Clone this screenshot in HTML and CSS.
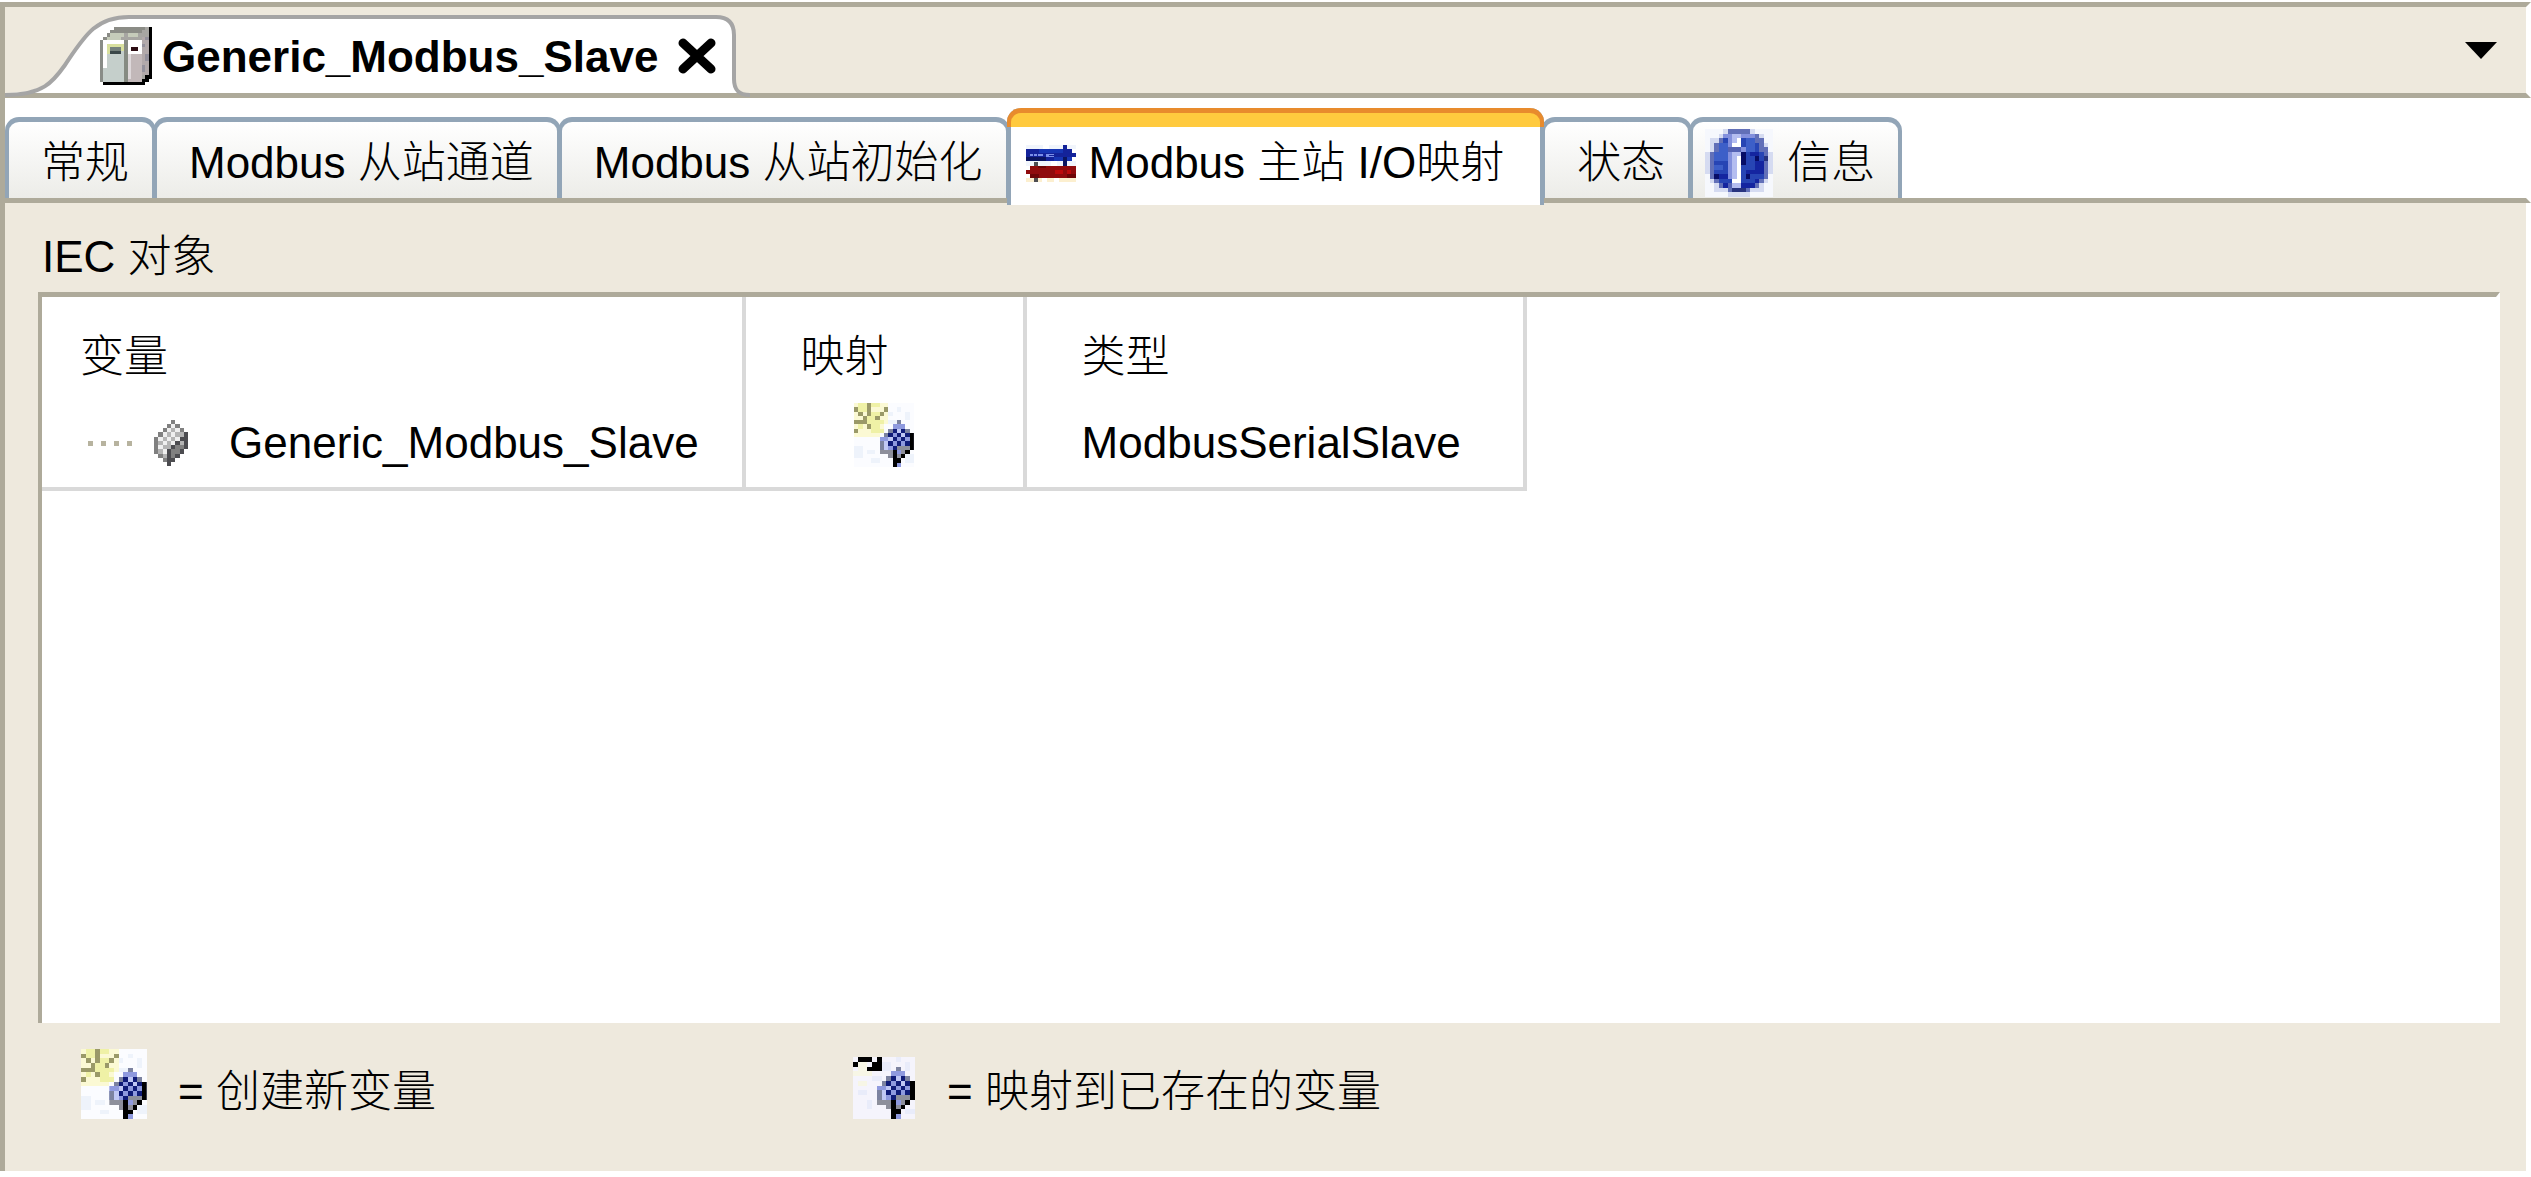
FILE: index.html
```html
<!DOCTYPE html>
<html lang="zh-CN">
  <head>
    <meta charset="UTF-8" />
    <meta name="viewport" content="width=device-width, initial-scale=1.0" />
    <title>Generic_Modbus_Slave</title>
    <link rel="stylesheet" href="styles.css">
  </head>
  <body>
    <!-- shared icon shapes -->
    <svg class="defs" aria-hidden="true">
      <symbol id="cube" viewBox="0 0 8 11">
        <path fill="#8f9ade" d="M4 0h1v1h1v1h1v1h1v4h-1v1h-1v1h-1v2h-1v-1h-1v-1h-1v-1h-1v-1h-1v-3h1v-1h1v-1h1v-1h1z" />
        <path fill="#7c83a0" d="M4 0h1v1h-1zM0 5h1v2h-1zM1 3h1v1h-1zM2 2h1v1h-1zM6 2h1v1h-1z" />
        <path fill="#8d8f9b" d="M0 7h1v1h-1zM1 7h3v1h1v1h-1v1h-1v-1h-1v-1h-1zM4 6h3v2h-1v1h-1v-2h-1z" />
        <path fill="#c0c8f4" d="M4 2h1v1h-1zM2 4h1v1h-1zM1 5h1v2h-1zM5 3h1v1h-1z" />
        <path fill="#101c78" d="M3 2h1v1h-1zM5 2h1v1h-1zM2 3h1v1h-1zM4 3h1v1h-1zM6 3h1v1h-1zM3 4h1v1h-1zM5 4h1v1h-1zM2 5h1v1h-1zM4 5h1v1h-1zM6 5h1v1h-1zM3 6h1v1h-1z" />
        <path fill="#000" d="M7 3h1v4h-1v1h-1v1h-1v1h-1v1h-1v-4h1v2h1v-1h1v-1h1z" />
      </symbol>
      <symbol id="new-var" viewBox="0 0 14 15">
        <path fill="#fbfcff" d="M0 0h14v15h-14z" />
        <path fill="#eef3fb" d="M8 2h1v1h-1zM10 1h1v1h-1zM12 2h1v2h-1zM8 4h2v1h-2zM0 10h2v3h-2zM3 11h2v1h-2zM4 13h2v1h-2zM12 12h2v2h-2z" />
        <path fill="#fbf9d4" d="M0 0h8v5h-1v2h-1v1h-6z" />
        <path fill="#eff1a6" d="M1 0h2v2h-2zM4 0h2v1h-2zM4 2h2v4h1v1h-3v-1h-1v-3h1zM1 5h1v1h-1zM6 4h1v1h-1z" />
        <path fill="#9a9968" d="M3 0h1v3h-1zM0 1h1v1h-1zM7 1h1v1h-1zM1 2h1v1h-1zM6 2h1v1h-1zM2 3h1v2h-2v-1h1zM5 3h1v1h-1zM0 4h1v1h-1zM3 5h1v1h-1zM0 6h1v1h-1z" />
        <use href="#cube" x="6" y="4" width="8" height="11" />
      </symbol>
      <symbol id="map-var" viewBox="0 0 13 13">
        <path fill="#f5f4fc" d="M0 0h13v13h-13z" />
        <path fill="#e9ecfa" d="M6 1h2v2h-2zM9 0h1v1h-1zM11 1h1v2h-1zM4 4h2v1h-2zM1 7h2v1h-2zM3 9h1v2h-1zM11 11h2v1h-2z" />
        <path fill="#f7f6e6" d="M1 1h2v2h-2zM0 3h4v1h-4zM1 5h2v1h-2z" />
        <path fill="#000" d="M1 0h3v1h-3zM5 0h1v3h-3v-1h1v-1h1zM0 1h1v1h-1z" />
        <use href="#cube" x="5" y="2" width="8" height="11" />
      </symbol>
    </svg>

    <main class="editor">
      <header class="doc-bar">
        <div class="doc-tab">
          <svg class="doc-slope" viewBox="0 0 123 78" aria-hidden="true">
            <path fill="#fff" d="M0 78C36 78 48 66 60 50C79 22 90 2 123 2V78z" />
            <path fill="none" stroke="#a5a5a5" stroke-width="4" d="M0 80C38 80 48 67 60 50C79 22 90 2 124 2" />
          </svg>
          <div class="doc-label">
            <svg class="plc-icon" viewBox="0 0 15 17" aria-hidden="true">
              <path fill="#a7a6a2" d="M4 0h10v15h-2v1h-12v-12h1v-1h1v-1h1v-1h1z" />
              <path fill="#8b8c86" d="M3 1h9v1h-9zM4 0h9v1h-9zM1 3h1v1h-1zM2 2h1v1h-1z" />
              <path fill="#c6ccba" d="M3 2h4v1h-4zM2 3h4v1h-4zM8 2h3v1h-3z" />
              <path fill="#b2a9aa" d="M12 3h2v11h-2z" />
              <path fill="#94919c" d="M12 5h1v1h-1zM13 8h1v2h-1zM12 11h1v2h-1zM13 3h1v1h-1z" />
              <path fill="#898c87" d="M0 4h1v12h-1z" />
              <path fill="#c5cfcb" d="M1 4h6v12h-6z" />
              <path fill="#fff" d="M1 4h1v8h-1zM2 4h5v1h-5zM8 4h4v4h-4z" />
              <path fill="#d8e09e" d="M2 5h5v1h-5zM2 6h1v2h-1zM5 6h2v1h-2z" />
              <path fill="#c2b8b9" d="M8 8h4v8h-4z" />
              <path fill="#ded8da" d="M8 8h1v7h-1z" />
              <path fill="#868b82" d="M7 4h1v12h-1z" />
              <path fill="#75817c" d="M3 6h3v2h-3z" />
              <path fill="#3b4849" d="M3 7h3v1h-3z" />
              <path fill="#2c0c12" d="M9 6h2v1h-2z" />
              <path fill="#000" d="M14 0h1v15h-1v1h-1v1h-12v-1h11v-1h1v-1h1z" />
            </svg>
            <span class="doc-title">Generic_Modbus_Slave</span>
            <button class="close" type="button" aria-label="关闭">
              <svg viewBox="0 0 38 36" aria-hidden="true">
                <path stroke="#000" stroke-width="9" stroke-linecap="round" d="M5 5L33 31M33 5L5 31" />
              </svg>
            </button>
          </div>
          <svg class="doc-end" viewBox="0 0 34 78" aria-hidden="true">
            <path fill="#fff" d="M0 2C12 2 18 8 18 20V64C18 70 20 78 24 78H0z" />
            <path fill="none" stroke="#a5a5a5" stroke-width="4" d="M0 2C12 2 18 8 18 20V64C18 74 22 80 34 80" />
          </svg>
        </div>
        <button class="doc-list" type="button" aria-label="窗口列表">
          <svg viewBox="0 0 32 17" aria-hidden="true"><path d="M0 0H32L16 17z" /></svg>
        </button>
      </header>

      <nav class="tabs" role="tablist">
        <button class="tab" type="button" role="tab">常规</button>
        <button class="tab" type="button" role="tab">Modbus 从站通道</button>
        <button class="tab" type="button" role="tab">Modbus 从站初始化</button>
        <button class="tab active" type="button" role="tab" aria-selected="true">
          <svg class="io-icon" viewBox="0 0 150 111" aria-hidden="true">
            <path fill="#f1f5fc" d="M0 0h150v12h-150zM0 48h150v14h-150z" />
            <path fill="#fcefcf" d="M0 98h150v13h-150z" />
            <path fill="#fff" d="M50 0h20v12h-20zM84 98h14v13h-14zM48 98h14v13h-14zM74 48h20v14h-20z" />
            <path fill="#14239a" d="M112 0h12v12h14v12h12v12h-12v12h-14v14h-12v-14h-112v-36h112z" />
            <path fill="#1736b4" d="M38 12h74v12h-74zM84 36h54v12h-54z" />
            <path fill="#0b1560" d="M0 36h60v12h-60zM112 36h12v26h-12z" />
            <path fill="#7b90e8" d="M13 26h8v8h-8zM24 26h10v8h-10zM37 26h14v8h-14zM60 26h24v3h-16v3h16v3h-24z" />
            <path fill="#4e4e52" d="M25 50h12v12h-12zM25 98h12v13h-12z" />
            <path fill="#900b0d" d="M12 62h138v36h-138v-12h-12v-12h12z" />
            <path fill="#6e0507" d="M12 86h26v12h-26zM124 86h26v12h-26zM37 62h24v6h-24z" />
            <path fill="#bd0a0c" d="M86 74h26v12h-26zM124 74h12v12h-12z" />
          </svg>
          Modbus 主站 I/O映射
        </button>
        <button class="tab" type="button" role="tab">状态</button>
        <button class="tab with-icon" type="button" role="tab">
          <svg class="info-icon" viewBox="0 0 15 15" aria-hidden="true">
            <path fill="#f6f8fd" d="M0 0h15v15h-15z" />
            <path fill="#d5dbf1" d="M4 0h7v1h2v2h1v2h1v5h-1v2h-1v2h-3v1h-5v-1h-3v-2h-1v-2h-1v-5h1v-3h2v-1h1z" />
            <path fill="#6270b8" d="M5 0h5v1h2v1h1v2h1v7h-1v1h-1v1h-2v1h-5v-1h-2v-1h-1v-1h-1v-6h1v-2h1v-1h2z" />
            <path fill="#2745b4" d="M4 2h7v1h1v2h1v6h-1v1h-1v1h-7v-1h-1v-1h-1v-6h1v-2h1z" />
            <path fill="#3d5fc8" d="M3 3h3v4h-4v-2h1zM9 2h2v3h-2zM2 8h2v1h-2z" />
            <path fill="#1425a0" d="M10 5h2v1h-2zM11 7h2v3h-2zM9 9h2v1h-2zM3 10h2v1h-2zM4 12h7v1h-7zM11 11h1v1h-1z" />
            <path fill="#070d66" d="M8 5h1v3h-1zM5 7h1v1h-1zM2 10h1v1h-1zM11 6h1v1h-1zM9 10h1v1h-1z" />
            <path fill="#27337f" d="M6 13h3v1h-3zM5 1h1v1h-1zM9 1h1v1h-1zM13 6h1v1h-1z" />
            <path fill="#8390dd" d="M4 1h7v1h-7zM5 2h1v9h-1zM8 4h1v1h-1z" />
            <path fill="#b4bdf0" d="M6 1h2v4h-2zM6 5h2v8h-2z" />
            <path fill="#fff" d="M7 2h1v1h-1zM6 3h2v1h-2zM7 6h1v5h-1zM6 11h2v1h-2z" />
            <path fill="#5462b4" d="M5 4h3v1h-3zM5 12h1v1h-1z" />
          </svg>
          信息
        </button>
      </nav>

      <section class="panel">
        <h2 class="panel-title">IEC 对象</h2>
        <div class="objects">
          <table>
            <thead>
              <tr>
                <th class="col-var">变量</th>
                <th class="col-map">映射</th>
                <th class="col-type">类型</th>
              </tr>
            </thead>
            <tbody>
              <tr>
                <td>
                  <div class="node">
                    <span class="branch"></span>
                    <svg class="node-icon" viewBox="0 0 8 11" aria-hidden="true">
                      <path fill="#b4b4b4" d="M4 0h1v1h1v1h1v1h1v4h-1v1h-1v1h-1v1h-1v1h-1v-1h-1v-1h-1v-1h-1v-4h1v-1h1v-1h1v-1h1z" />
                      <path fill="#efefef" d="M4 1h1v1h-1zM3 2h1v1h-1zM5 2h1v1h-1zM2 3h1v1h-1zM4 3h1v1h-1zM1 4h1v1h-1zM3 4h1v1h-1zM5 4h1v1h-1zM2 5h1v1h-1zM4 5h1v1h-1zM1 6h1v1h-1zM2 7h1v1h-1z" />
                      <path fill="#808080" d="M4 0h1v1h-1zM3 1h1v1h-1zM5 1h1v1h-1zM2 2h1v1h-1zM6 2h1v1h-1zM1 3h1v1h-1zM0 4h1v4h-1zM4 6h3v2h-1v1h-1v1h-1zM1 8h1v1h-1zM2 9h1v1h-1z" />
                      <path fill="#4c4c50" d="M7 3h1v4h-1zM6 4h1v1h-1zM5 5h1v1h-1zM4 6h1v1h-1zM3 7h1v4h-1zM6 7h1v1h-1zM5 8h1v1h-1zM4 9h1v1h-1z" />
                    </svg>
                    <span>Generic_Modbus_Slave</span>
                  </div>
                </td>
                <td class="map-cell">
                  <svg class="map-icon" role="img" aria-label="创建新变量"><use href="#new-var" /></svg>
                </td>
                <td>ModbusSerialSlave</td>
              </tr>
            </tbody>
          </table>
        </div>
        <footer class="legend">
          <div class="legend-item">
            <svg class="legend-icon" aria-hidden="true"><use href="#new-var" /></svg>
            <span class="legend-text">= 创建新变量</span>
          </div>
          <div class="legend-item">
            <svg class="legend-icon small" aria-hidden="true"><use href="#map-var" /></svg>
            <span class="legend-text">= 映射到已存在的变量</span>
          </div>
        </footer>
      </section>
    </main>
  </body>
</html>
```

FILE: styles.css
```css
* {
  box-sizing: border-box;
}

body {
  margin: 0;
  padding: 2px 0 6px;
  min-height: 100vh;
  display: flex;
  background: #fff;
  color: #000;
  font-family: "Liberation Sans", "Noto Sans CJK SC", sans-serif;
  font-size: 44px;
  font-weight: 300;
  line-height: 52px;
}

button {
  margin: 0;
  padding: 0;
  border: 0;
  background: none;
  color: inherit;
  font: inherit;
}

svg {
  display: block;
  flex: none;
}

.defs {
  position: absolute;
  width: 0;
  height: 0;
}

.plc-icon,
.io-icon,
.info-icon,
.node-icon,
.map-icon,
.legend-icon {
  shape-rendering: crispEdges;
}

.editor {
  flex: 1;
  display: flex;
  flex-direction: column;
  border-left: 5px solid #aeaa9a;
}

/* document bar */
.doc-bar {
  display: flex;
  justify-content: space-between;
  align-items: flex-start;
  height: 96px;
  border-top: 5px solid #aeaa9a;
  border-right: 5px solid #fff;
  border-bottom: 5px solid #aeaa9a;
  background: #eee9dd;
}

.doc-tab {
  display: flex;
  margin-top: 8px;
}

.doc-slope,
.doc-end {
  height: 78px;
  overflow: visible;
}

.doc-slope {
  width: 123px;
}

.doc-end {
  width: 34px;
}

.doc-label {
  display: flex;
  align-items: center;
  height: 78px;
  border-top: 4px solid #a5a5a5;
  background: #fff;
}

.plc-icon {
  width: 52px;
  height: 60px;
  margin-left: -28px;
}

.doc-title {
  margin: 0 20px 0 10px;
  padding-top: 2px;
  font-weight: 700;
}

.close svg {
  width: 38px;
  height: 36px;
}

.doc-list {
  margin: 35px 29px 0 0;
}

.doc-list svg {
  width: 32px;
  height: 17px;
}

/* editor pages */
.tabs {
  display: flex;
  align-items: flex-end;
  height: 105px;
  border-right: 5px solid #fff;
  border-bottom: 5px solid #aeaa9a;
  background: #fff;
}

.tab {
  display: flex;
  align-items: center;
  height: 81px;
  margin-left: -3px;
  padding: 6px 23px 0 32px;
  border: 4px solid #92a5b7;
  border-top-width: 5px;
  border-bottom: 0;
  border-radius: 14px 14px 0 0;
  background: linear-gradient(#fff, #ecece8);
  white-space: nowrap;
}

.tab:first-child {
  margin-left: 0;
}

.tab.active {
  position: relative;
  z-index: 1;
  gap: 13px;
  height: 97px;
  margin-bottom: -7px;
  padding: 13px 36px 0 15px;
  border-top: 0;
  background: #fff;
}

.tab.active::before {
  content: "";
  position: absolute;
  top: 0;
  left: -4px;
  right: -4px;
  height: 14px;
  border: 4px solid #e88b2d;
  border-top-width: 5px;
  border-bottom: 0;
  border-radius: 14px 14px 0 0;
  background: #ffca3e;
}

.tab.with-icon {
  gap: 14px;
  padding-left: 12px;
}

.io-icon {
  width: 50px;
  height: 37px;
}

.info-icon {
  width: 68px;
  height: 68px;
}

/* page content */
.panel {
  flex: 1;
  display: flex;
  flex-direction: column;
  padding: 28px 26px 0 33px;
  border-right: 5px solid #fff;
  background: #eee9dd;
}

.panel-title {
  margin: 0 0 9px 4px;
  font-size: 44px;
  font-weight: 300;
  line-height: 52px;
}

.objects {
  flex: 1;
  border: solid #aeaa9a;
  border-width: 5px 0 0 4px;
  border-right: 4px solid #fff;
  background: #fff;
}

table {
  border-collapse: separate;
  border-spacing: 0;
  border-bottom: 4px solid #d9d9d9;
}

th,
td {
  height: 70px;
  padding: 0 50px 0 55px;
  border-right: 4px solid #d9d9d9;
  font-weight: 300;
  text-align: left;
  vertical-align: middle;
  white-space: nowrap;
}

th {
  height: 120px;
}

tr > :first-child {
  padding: 0 43px 0 38px;
}

tr > :last-child {
  padding-right: 62px;
}

.col-map {
  width: 281px;
}

td {
  vertical-align: top;
}

.node {
  display: flex;
  align-items: center;
  padding-left: 8px;
}

/* dotted tree line */
.branch {
  width: 46px;
  height: 5px;
  margin-right: 20px;
  background: repeating-linear-gradient(90deg, #b7b39f 0 5px, transparent 5px 13px);
}

.node-icon {
  width: 34px;
  height: 48px;
  margin-right: 41px;
}

.map-cell {
  padding: 0;
}

.map-icon {
  width: 60px;
  height: 64px;
  margin: -14px auto 0;
}

.legend {
  display: flex;
  height: 148px;
  padding: 26px 0 0 43px;
}

.legend-item {
  display: flex;
  align-items: flex-end;
  gap: 31px;
  height: 70px;
}

.legend-item:first-child {
  width: 771px;
}

.legend-icon {
  width: 66px;
  height: 70px;
}

.legend-icon.small {
  width: 64px;
  height: 62px;
}

.legend-text {
  padding-bottom: 1px;
}
```
